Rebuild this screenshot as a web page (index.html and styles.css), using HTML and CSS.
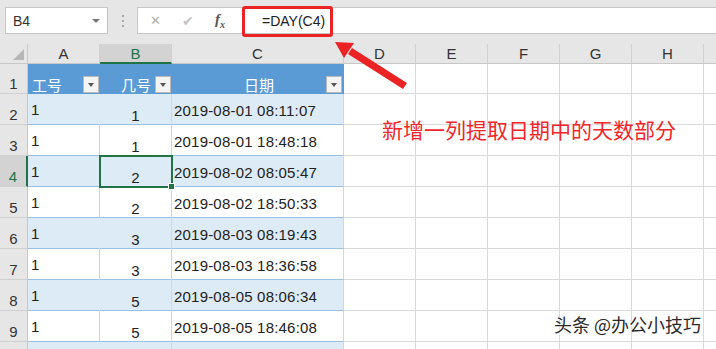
FILE: index.html
```html
<!DOCTYPE html>
<html lang="zh-CN">
<head>
    <meta charset="UTF-8">
    <meta name="viewport" content="width=device-width, initial-scale=1.0">
    <title>DAY 函数</title>
    <link rel="stylesheet" href="styles.css">
</head>
<body>

    <div class="toolbar">
        <div class="namebox">
            <span>B4</span>
            <span class="caret"></span>
        </div>
        <div class="grip"><i></i><i></i><i></i></div>
        <div class="fxbar">
            <div class="fxbtns">
                <span class="btn-x">&#x2715;</span>
                <span class="btn-ok">&#x2714;</span>
                <span class="btn-fx">f<sub>x</sub></span>
            </div>
            <div class="formula">=DAY(C4)</div>
        </div>
    </div>

    <div class="sheet">
        <div class="row colheads">
            <div class="corner"><span class="tri"></span></div>
            <div class="ch">A</div>
            <div class="ch active">B</div>
            <div class="ch">C</div>
            <div class="ch">D</div>
            <div class="ch">E</div>
            <div class="ch">F</div>
            <div class="ch">G</div>
            <div class="ch">H</div>
            <div class="ch"></div>
        </div>

        <div class="row r1">
            <div class="rh">1</div>
            <div class="c th th-left">工号<span class="filter"></span></div>
            <div class="c th th-right">几号<span class="filter"></span></div>
            <div class="c th th-center"><span class="th-label">日期</span><span class="filter"></span></div>
            <div class="rest"></div>
        </div>

        <div class="row band">
            <div class="rh">2</div>
            <div class="c a">1</div><div class="c b">1</div><div class="c d">2019-08-01 08:11:07</div>
            <div class="rest"></div>
        </div>
        <div class="row">
            <div class="rh">3</div>
            <div class="c a">1</div><div class="c b">1</div><div class="c d">2019-08-01 18:48:18</div>
            <div class="rest"></div>
        </div>
        <div class="row band">
            <div class="rh active">4</div>
            <div class="c a">1</div><div class="c b selected">2</div><div class="c d">2019-08-02 08:05:47</div>
            <div class="rest"></div>
        </div>
        <div class="row">
            <div class="rh">5</div>
            <div class="c a">1</div><div class="c b">2</div><div class="c d">2019-08-02 18:50:33</div>
            <div class="rest"></div>
        </div>
        <div class="row band">
            <div class="rh">6</div>
            <div class="c a">1</div><div class="c b">3</div><div class="c d">2019-08-03 08:19:43</div>
            <div class="rest"></div>
        </div>
        <div class="row">
            <div class="rh">7</div>
            <div class="c a">1</div><div class="c b">3</div><div class="c d">2019-08-03 18:36:58</div>
            <div class="rest"></div>
        </div>
        <div class="row band">
            <div class="rh">8</div>
            <div class="c a">1</div><div class="c b">5</div><div class="c d">2019-08-05 08:06:34</div>
            <div class="rest"></div>
        </div>
        <div class="row">
            <div class="rh">9</div>
            <div class="c a">1</div><div class="c b">5</div><div class="c d">2019-08-05 18:46:08</div>
            <div class="rest"></div>
        </div>
        <div class="row band">
            <div class="rh"></div>
            <div class="c a"></div><div class="c b"></div><div class="c d"></div>
            <div class="rest"></div>
        </div>
    </div>

    <!-- annotations drawn over the screenshot -->
    <div class="callout-box"></div>
    <svg class="arrow" width="716" height="349" viewBox="0 0 716 349">
        <polygon points="407,83 403,89 348,54 352,48" fill="#ec2325"/>
        <polygon points="335,42 354,43 344,58" fill="#ec2325"/>
    </svg>
    <div class="note">新增一列提取日期中的天数部分</div>
    <div class="watermark">头条 @办公小技巧</div>

</body>
</html>
```

FILE: styles.css
```css
body {
    margin: 0;
    width: 716px;
    height: 349px;
    overflow: hidden;
    position: relative;
    background-color: #fff;
    font-family: "Liberation Sans", "Noto Sans CJK SC", sans-serif;
    color: #222;
}

.toolbar {
    height: 44px;
    box-sizing: border-box;
    padding: 7px 0 0 5px;
    background-color: #e6e6e6;
    display: flex;
    align-items: flex-start;
}

.namebox {
    width: 103px;
    height: 27px;
    box-sizing: border-box;
    background-color: #fff;
    border: 1px solid #c6c6c6;
    display: flex;
    align-items: center;
    justify-content: space-between;
    padding: 0 7px 0 7px;
    font-size: 14px;
    color: #333;
}

.caret {
    width: 0;
    height: 0;
    border-left: 4px solid transparent;
    border-right: 4px solid transparent;
    border-top: 4px solid #777;
}

.grip {
    width: 29px;
    height: 27px;
    display: flex;
    flex-direction: column;
    align-items: center;
    justify-content: center;
    gap: 3px;
}

.grip i {
    width: 2px;
    height: 2px;
    background-color: #a8a8a8;
}

.fxbar {
    flex: 1;
    height: 27px;
    box-sizing: border-box;
    background-color: #fff;
    border: 1px solid #c6c6c6;
    border-right: none;
    display: flex;
    align-items: center;
}

.fxbtns {
    width: 104px;
    height: 100%;
    display: flex;
    align-items: center;
    color: #b0b0b0;
}

.btn-x {
    margin-left: 12px;
    font-size: 13px;
}

.btn-ok {
    margin-left: 21px;
    font-size: 14px;
    color: #c4c4c4;
}

.btn-fx {
    margin-left: 21px;
    font-family: "Liberation Serif", serif;
    font-style: italic;
    font-weight: bold;
    font-size: 15px;
    color: #555;
}

.btn-fx sub {
    font-size: 10px;
}

.formula {
    height: 100%;
    flex: 1;
    border-left: 1px solid #d0d0d0;
    padding-left: 19px;
    display: flex;
    align-items: center;
    font-size: 14px;
    color: #222;
}

.sheet {
    display: flex;
    flex-direction: column;
}

.row {
    display: grid;
    grid-template-columns: 28px 72px 72px 172px 1fr;
    height: 31px;
}

.colheads {
    height: 20px;
    grid-template-columns: 28px 72px 72px 172px 72px 72px 72px 72px 72px 72px;
    background-color: #e6e6e6;
}

.corner {
    border-right: 1px solid #c8c8c8;
    border-bottom: 1px solid #c8c8c8;
    display: flex;
    align-items: flex-end;
    justify-content: flex-end;
    padding: 0 3px 3px 0;
}

.tri {
    width: 0;
    height: 0;
    border-left: 11px solid transparent;
    border-bottom: 11px solid #b7b7b7;
}

.ch {
    border-right: 1px solid #d0d0d0;
    border-bottom: 1px solid #c8c8c8;
    display: flex;
    align-items: center;
    justify-content: center;
    font-size: 15px;
    color: #333;
}

.ch.active {
    background-color: #d3d3d3;
    border-bottom: 2px solid #217346;
    color: #217346;
}

.r1 {
    height: 30px;
}

.rh {
    background-color: #e6e6e6;
    border-right: 1px solid #c8c8c8;
    border-bottom: 1px solid #d0d0d0;
    display: flex;
    align-items: flex-end;
    justify-content: center;
    padding-bottom: 1px;
    font-size: 15px;
    color: #333;
}

.rh.active {
    background-color: #d3d3d3;
    border-right: 2px solid #217346;
    color: #217346;
}

.c {
    box-sizing: border-box;
    border-right: 1px solid #d4d4d4;
    border-bottom: 1px solid #9bc2e6;
    font-size: 15px;
    display: flex;
    position: relative;
}

.band .c {
    background-color: #ddebf7;
    border-right-color: #ddebf7;
}

.band .c.b,
.row .c.d {
    border-right-color: #c9d9e8;
}

.th {
    background-color: #5b9bd5;
    border-right: none;
    border-bottom: none;
    color: #fff;
    font-family: "Noto Sans CJK SC", sans-serif;
    align-items: flex-end;
    padding-bottom: 0;
    line-height: 1.3;
}

.r1 .c.th:nth-child(4) {
    border-right: 1px solid #5b9bd5;
}

.th-left {
    padding-left: 4px;
    justify-content: space-between;
}

.th-right {
    justify-content: flex-end;
    gap: 4px;
}

.th-center {
    justify-content: flex-end;
}

.th-label {
    margin-right: 52px;
}

.filter {
    width: 16px;
    height: 17px;
    box-sizing: border-box;
    margin: 0 1px 1px 0;
    align-self: flex-end;
    background-color: #f4f4f4;
    border: 1px solid #b9b9b9;
    display: flex;
    align-items: center;
    justify-content: center;
}

.filter::after {
    content: "";
    width: 0;
    height: 0;
    border-left: 3.5px solid transparent;
    border-right: 3.5px solid transparent;
    border-top: 4px solid #555;
}

.a {
    padding-left: 3px;
    align-items: center;
}

.b {
    justify-content: center;
    align-items: flex-end;
    padding-bottom: 0;
}

.d {
    padding-left: 2px;
    align-items: center;
    padding-top: 2px;
    letter-spacing: 0.2px;
    color: #222;
}

.selected {
    outline: 2px solid #217346;
    outline-offset: -1px;
    z-index: 2;
}

.selected::after {
    content: "";
    position: absolute;
    right: -4px;
    bottom: -4px;
    width: 5px;
    height: 5px;
    background-color: #217346;
    border: 1px solid #fff;
}

.rest {
    border-bottom: 1px solid #d9d9d9;
    background-image: repeating-linear-gradient(to right, transparent 0 71px, #d9d9d9 71px 72px);
}

.callout-box {
    position: absolute;
    left: 242px;
    top: 6px;
    width: 91px;
    height: 31px;
    box-sizing: border-box;
    border: 3px solid #ec2325;
    border-radius: 3px;
}

.arrow {
    position: absolute;
    left: 0;
    top: 0;
}

.note {
    position: absolute;
    left: 382px;
    top: 114px;
    font-family: "Noto Sans CJK SC", sans-serif;
    font-size: 21px;
    color: #f0262a;
    white-space: nowrap;
}

.watermark {
    position: absolute;
    left: 554px;
    top: 311px;
    font-family: "Noto Sans CJK SC", sans-serif;
    font-size: 18px;
    color: #2a2a2a;
    text-shadow: 1px 1px 0 #fff, -1px 0 0 #fff;
    white-space: nowrap;
}
```
